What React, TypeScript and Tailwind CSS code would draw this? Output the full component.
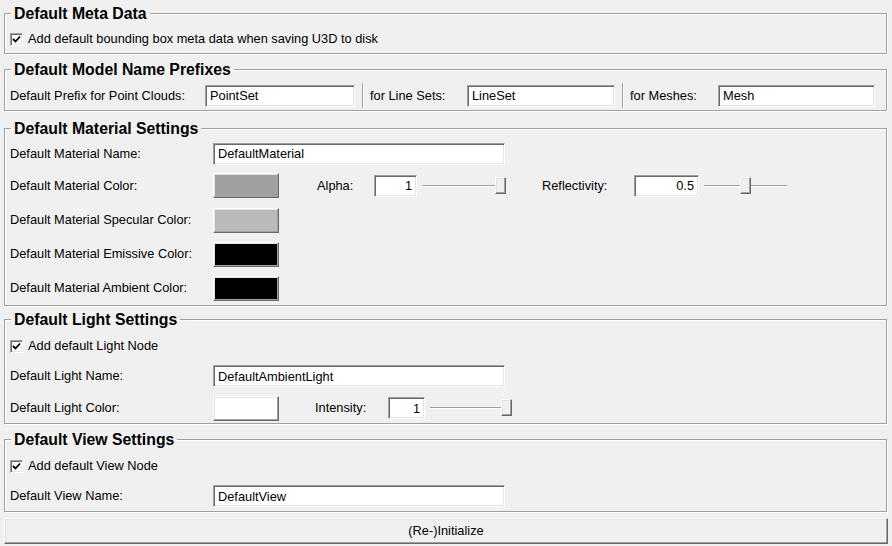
import React from "react";

const sunken =
  "border border-t-[#a0a0a0] border-l-[#a0a0a0] border-b-white border-r-white shadow-[inset_1px_1px_0_#696969,inset_-1px_-1px_0_#e3e3e3]";
const raised =
  "border border-t-white border-l-white border-b-[#696969] border-r-[#696969] shadow-[inset_-1px_-1px_0_#a0a0a0,inset_1px_1px_0_#e3e3e3]";

function TextBox({ value, w, right }: { value: string; w: string; right?: boolean }) {
  return (
    <input
      readOnly
      value={value}
      className={`${sunken} ${w} h-[22px] bg-white px-[4px] text-[12.8px] text-black outline-none ${
        right ? "text-right" : ""
      }`}
    />
  );
}

function CheckBox() {
  return (
    <div className={`${sunken} w-[13px] h-[13px] bg-white flex items-center justify-center shrink-0`}>
      <svg width="9" height="9" viewBox="0 0 9 9">
        <path d="M1 4 L3.5 6.5 L8 1.5" stroke="#000" strokeWidth="1.8" fill="none" />
      </svg>
    </div>
  );
}

function ColorButton({ color }: { color: string }) {
  return <div className={`${raised} w-[66px] h-[25px] ${color}`} />;
}

function Slider({ w, pos }: { w: string; pos: number }) {
  return (
    <div className={`relative ${w} h-[20px] flex items-center`}>
      <div className="w-full h-[2px] border-t border-t-[#a0a0a0] border-b border-b-white" />
      <div
        className={`${raised} absolute top-[1px] w-[11px] h-[17px] bg-[#f0f0f0]`}
        style={{ left: pos }}
      />
    </div>
  );
}

function Group({ title, className, children }: { title: string; className?: string; children: React.ReactNode }) {
  return (
    <fieldset className={`border border-[#a0a0a0] shadow-[inset_1px_1px_0_#fff,1px_1px_0_#fff] px-[5px] ${className ?? ""}`}>
      <legend className="ml-[1px] px-[3px] text-[15.8px] font-bold leading-[17px]">{title}</legend>
      {children}
    </fieldset>
  );
}

function Separator() {
  return <div className="w-[1px] h-[25px] bg-[#a0a0a0] shadow-[1px_0_0_#fff] mx-[7px]" />;
}

export default function App() {
  return (
    <div className="w-[892px] h-[546px] overflow-hidden bg-[#f0f0f0] pl-[4px] pr-[5px] pt-[5px] text-black font-['Liberation_Sans',Arial,sans-serif] text-[12.8px]">
      <Group title="Default Meta Data" className="pt-[7px] pb-[4px]">
        <div className="h-[20px] flex items-center gap-[5px]">
          <CheckBox />
          <span>Add default bounding box meta data when saving U3D to disk</span>
        </div>
      </Group>

      <Group title="Default Model Name Prefixes" className="mt-[7px] pt-[5px] pb-[2px]">
        <div className="h-[25px] flex items-center">
          <span className="w-[195px]">Default Prefix for Point Clouds:</span>
          <TextBox value="PointSet" w="w-[150px]" />
          <Separator />
          <span className="w-[97px]">for Line Sets:</span>
          <TextBox value="LineSet" w="w-[148px]" />
          <Separator />
          <span className="w-[88px]">for Meshes:</span>
          <TextBox value="Mesh" w="w-[157px]" />
        </div>
      </Group>

      <Group title="Default Material Settings" className="mt-[9px] pt-[2px]">
        <div className="h-[29px] flex items-center">
          <span className="w-[203px]">Default Material Name:</span>
          <TextBox value="DefaultMaterial" w="w-[292px]" />
        </div>
        <div className="h-[35px] flex items-center">
          <span className="w-[203px]">Default Material Color:</span>
          <ColorButton color="bg-[#a0a0a0]" />
          <span className="w-[57px] ml-[38px]">Alpha:</span>
          <TextBox value="1" w="w-[43px]" right />
          <div className="ml-[5px]">
            <Slider w="w-[84px]" pos={73} />
          </div>
          <span className="w-[92px] ml-[36px]">Reflectivity:</span>
          <TextBox value="0.5" w="w-[65px]" right />
          <div className="ml-[5px]">
            <Slider w="w-[83px]" pos={36} />
          </div>
        </div>
        <div className="h-[34px] flex items-center">
          <span className="w-[203px]">Default Material Specular Color:</span>
          <ColorButton color="bg-[#bababa]" />
        </div>
        <div className="h-[34px] flex items-center">
          <span className="w-[203px]">Default Material Emissive Color:</span>
          <ColorButton color="bg-black" />
        </div>
        <div className="h-[34px] flex items-center">
          <span className="w-[203px]">Default Material Ambient Color:</span>
          <ColorButton color="bg-black" />
        </div>
      </Group>

      <Group title="Default Light Settings" className="mt-[5px] pt-[8px]">
        <div className="h-[20px] flex items-center gap-[5px]">
          <CheckBox />
          <span>Add default Light Node</span>
        </div>
        <div className="h-[34px] mt-[3px] flex items-center">
          <span className="w-[203px]">Default Light Name:</span>
          <TextBox value="DefaultAmbientLight" w="w-[292px]" />
        </div>
        <div className="h-[30px] flex items-center">
          <span className="w-[203px]">Default Light Color:</span>
          <ColorButton color="bg-white" />
          <span className="w-[73px] ml-[36px]">Intensity:</span>
          <TextBox value="1" w="w-[37px]" right />
          <div className="ml-[5px]">
            <Slider w="w-[82px]" pos={71} />
          </div>
        </div>
      </Group>

      <Group title="Default View Settings" className="mt-[7px] pt-[8px]">
        <div className="h-[20px] flex items-center gap-[5px]">
          <CheckBox />
          <span>Add default View Node</span>
        </div>
        <div className="h-[30px] mt-[5px] flex items-center">
          <span className="w-[203px]">Default View Name:</span>
          <TextBox value="DefaultView" w="w-[292px]" />
        </div>
      </Group>

      <button className={`${raised} mt-[6px] w-[884px] h-[26px] bg-[#f0f0f0] text-[12.8px] text-black`}>
        (Re-)Initialize
      </button>
    </div>
  );
}
